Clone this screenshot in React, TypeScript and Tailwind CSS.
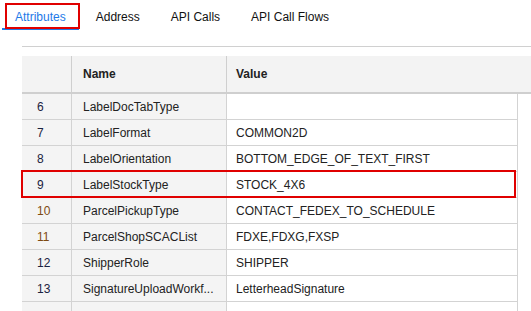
import React from 'react';

type Row = { n: number; name: string; value: string; flagged?: boolean };

const rows: Row[] = [
  { n: 6, name: 'LabelDocTabType', value: '' },
  { n: 7, name: 'LabelFormat', value: 'COMMON2D' },
  { n: 8, name: 'LabelOrientation', value: 'BOTTOM_EDGE_OF_TEXT_FIRST' },
  { n: 9, name: 'LabelStockType', value: 'STOCK_4X6' },
  { n: 10, name: 'ParcelPickupType', value: 'CONTACT_FEDEX_TO_SCHEDULE', flagged: true },
  { n: 11, name: 'ParcelShopSCACList', value: 'FDXE,FDXG,FXSP', flagged: true },
  { n: 12, name: 'ShipperRole', value: 'SHIPPER' },
  { n: 13, name: 'SignatureUploadWorkf...', value: 'LetterheadSignature' },
  { n: 14, name: '', value: '' },
];

const tabs = ['Attributes', 'Address', 'API Calls', 'API Call Flows'];

const App: React.FC = () => {
  return (
    <div
      className="h-[311px] w-[531px] overflow-hidden bg-white text-[12px] text-[#222]"
      style={{ fontFamily: '"Liberation Sans", Arial, sans-serif' }}
    >
      {/* tabs */}
      <div className="flex pl-[2px]">
        {tabs.map((t, i) => (
          <div
            key={t}
            className={
              i === 0
                ? 'relative mr-[4px] border-b-2 border-[#1e7ae8] px-[13px] pt-[10px] pb-[4px] leading-[14px] text-[#1e7ae8]'
                : i === 1
                  ? 'mr-[5px] border-b-2 border-transparent px-[13px] pt-[10px] pb-[4px] leading-[14px] text-[#111]'
                  : 'mr-[5px] border-b-2 border-transparent px-[13px] pt-[10px] pb-[4px] leading-[14px] text-[#111]'
            }
          >
            {t}
            {i === 0 && (
              <div className="absolute left-[3px] top-[3px] h-[26px] w-[75px] border-2 border-[#e00000]" />
            )}
          </div>
        ))}
      </div>

      <div className="ml-[22px] mt-[16px] h-px bg-[#d0d0d0]" />

      {/* table */}
      <div className="relative ml-[22px] mt-[9px]">
        <div className="grid h-[38px] grid-cols-[50px_155px_1fr] border-b-2 border-[#cfcfcf] bg-[#f3f3f3] font-bold">
          <div className="border-r border-[#cfcfcf]" />
          <div className="flex items-center border-r border-[#cfcfcf] pl-[11px]">Name</div>
          <div className="flex items-center pl-[9px]">Value</div>
        </div>
        {rows.map((r) => (
          <div key={r.n} className="grid h-[26px] w-[496px] grid-cols-[50px_155px_291px]">
            <div
              className={
                r.flagged
                  ? 'flex items-center border-r border-b border-[#d3d3d3] bg-[#f4f4f4] pl-[15px] text-[#7e4a12]'
                  : 'flex items-center border-r border-b border-[#d3d3d3] bg-[#f4f4f4] pl-[15px] text-[#1a2240]'
              }
            >
              {r.n <= 13 ? r.n : ''}
            </div>
            <div className="flex items-center truncate border-r border-b border-[#d3d3d3] bg-[#f4f4f4] pl-[11px]">
              {r.name}
            </div>
            <div className="flex items-center border-r border-b border-[#d3d3d3] bg-white pl-[9px]">{r.value}</div>
          </div>
        ))}
        {/* highlight on LabelStockType row */}
        <div className="absolute left-[-1px] top-[114px] h-[28px] w-[495px] border-2 border-[#e00000]" />
      </div>
    </div>
  );
};

export default App;
